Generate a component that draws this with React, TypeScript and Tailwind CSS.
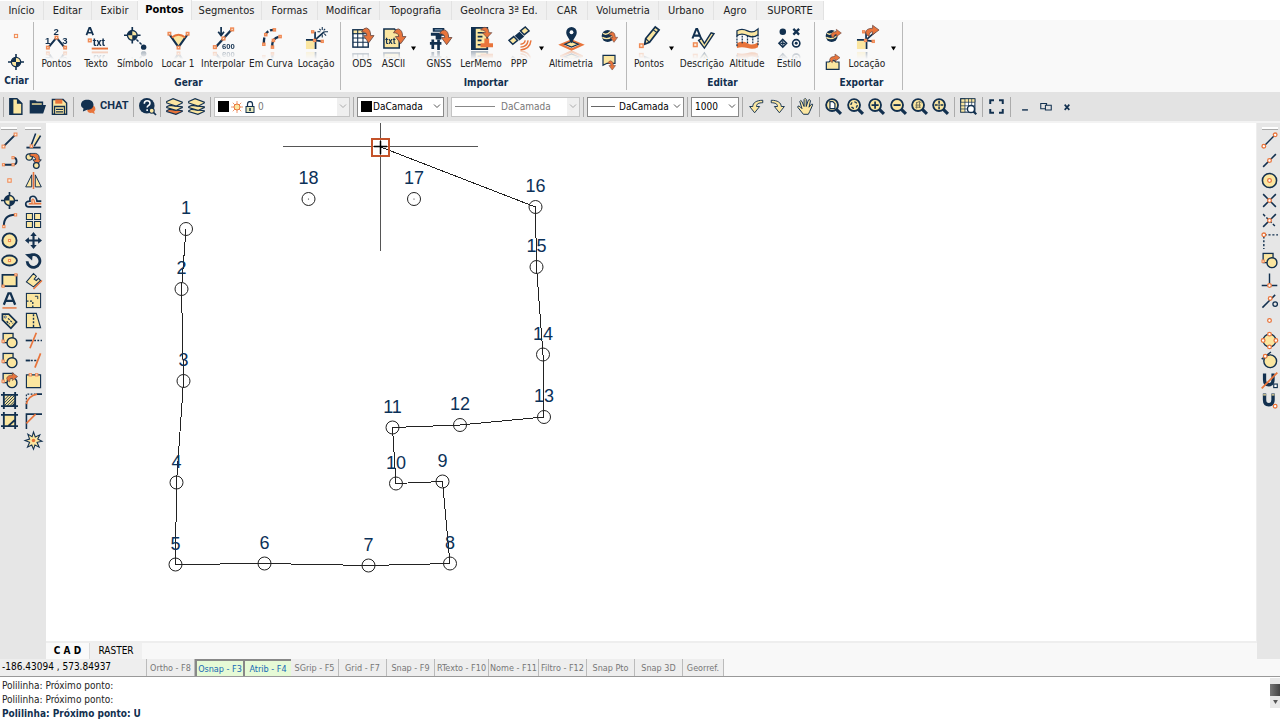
import React, { type ReactNode } from "react";

const N = "#12304f";
const O = "#e8743b";
const Y = "#fbe6a0";

/* ---------- drawing helpers ---------- */

const Sq = ({ x, y, r = 2 }: { x: number; y: number; r?: number }) => (
  <rect x={x - r} y={y - r} width={r * 2} height={r * 2} fill="#fdeedd" stroke="#f08a55" strokeWidth={1.5} />
);
const Ring = ({ x, y, r = 2.6 }: { x: number; y: number; r?: number }) => (
  <circle cx={x} cy={y} r={r} fill="#fff" stroke={O} strokeWidth={1.8} />
);
const Lens = ({ children }: { children?: ReactNode }) => (
  <>
    <path d="M16 16l6.500 6.500" stroke={N} strokeWidth={4.400} />
    <circle cx="10" cy="10" r="8.400" fill={Y} stroke={N} strokeWidth={2.600} />
    {children}
  </>
);
const Target = () => (
  <>
    <path d="M12 0v24M0 12h24" stroke={N} strokeWidth={2.4} />
    <circle cx="12" cy="12" r="7" fill={Y} stroke={N} strokeWidth={2} />
    <path d="M12 12V5a7 7 0 0 0-7 7zM12 12v7a7 7 0 0 0 7-7z" fill={N} />
  </>
);
const Curl = ({ t = "" }: { t?: string }) => (
  <path transform={t} d="M-1 3Q1-1 4-1 8.500 0 8.500 7H12L6.500 14.500 1 7H4.500Q4.500 3-1 3z" fill={O} stroke="#6b4a45" strokeWidth={0.9} />
);
const Shapes = () => (
  <>
    <rect x="3" y="2" width="14" height="13" fill={Y} stroke={N} strokeWidth={1.8} />
    <circle cx="15.500" cy="15" r="7" fill={Y} stroke={N} strokeWidth={2} />
    <Sq x={3} y={13} r={1.6} />
  </>
);
const Globe = () => (
  <>
    <circle cx="10" cy="12" r="9" fill={N} />
    <path d="M3 8c4 3 9 0 12-3M2 14c5 3 11 2 16-2" stroke={Y} strokeWidth={2} fill="none" />
  </>
);
const Stake = () => (
  <>
    <rect x="1" y="14" width="9" height="9" fill={Y} />
    <path d="M1 13.500h10V23M10.500 13.500V5M10.500 13.500L20 5M10.500 14l8 1" stroke={N} strokeWidth={1.8} fill="none" />
    <Sq x={8} y={5} r={1} />
    <Sq x={18} y={15} r={1} />
    <Sq x={10} y={14} r={1} />
  </>
);
const Layers = ({ hot = false }: { hot?: boolean }) => (
  <>
    <path d="M1 18l4-2 18 2v1l-9 4-13-4z" fill={hot ? O : Y} stroke={N} strokeWidth={1.6} />
    <path d="M1 12.500l4-2 18 2v1l-9 4-13-4z" fill={Y} stroke={N} strokeWidth={1.6} />
    <path d="M1 5l9-4 13 5v1l-9 4.500L1 7z" fill={Y} stroke={N} strokeWidth={1.6} />
  </>
);
const Grid4 = ({ w }: { w: number }) => (
  <>
    <rect x="2" y="3" width={w} height="18" fill="#fff" stroke={N} strokeWidth={1.5} />
    <rect x="2" y="3" width={w} height="4" fill={Y} stroke={N} strokeWidth={1.2} />
    <path d={`M2 11.500h${w}M2 16h${w}M7 3v18M12.500 3v18`} stroke={N} strokeWidth={1.1} />
  </>
);

const art: Record<string, ReactNode> = {
  point: <Sq x={12} y={12} r={2.4} />,
  target: <Target />,
  pontos: (
    <>
      <path d="M3 22l9-11 9 11" stroke={N} strokeWidth={2.2} fill="none" />
      <Sq x={3} y={21.500} r={1.3} /><Sq x={12} y={11} r={1.3} /><Sq x={21} y={21.500} r={1.3} />
      <g fill={N} fontFamily="Liberation Sans, sans-serif" fontWeight="bold" fontSize="10">
        <text x="0" y="17.500">1</text><text x="9" y="8">2</text><text x="18" y="17.500">3</text>
      </g>
    </>
  ),
  texto: (
    <>
      <path d="M1.500 8.500L4.500 1h1l3 7.500M3 6h4" stroke={N} strokeWidth={1.8} fill="none" />
      <Sq x={5} y={14} r={1.4} />
      <text x="8" y="19.500" fill={N} fontFamily="Roboto, sans-serif" fontWeight="bold" fontSize="11">txt</text>
      <path d="M7 22.500h17" stroke={O} strokeWidth={2} />
    </>
  ),
  simbolo: (
    <>
      <g transform="scale(.72)"><Target /></g>
      <path d="M13 13l6 6" stroke={N} strokeWidth={1.5} strokeDasharray="3 1.500" />
      <circle cx="20.500" cy="21" r="2.800" fill={N} />
    </>
  ),
  locar: (
    <>
      <path d="M12 20L5 10q7-5 14 0z" fill={Y} />
      <path d="M2 7l10 14L22 7" stroke={N} strokeWidth={2.2} fill="none" />
      <path d="M5 11q7-6 14 0" stroke={O} strokeWidth={2} fill="none" />
      <Sq x={2.500} y={7} r={1.3} /><Sq x={12} y={21.500} r={1.3} /><Sq x={21.500} y={7} r={1.3} />
    </>
  ),
  interpolar: (
    <>
      <path d="M3 22L21 2" stroke={N} strokeWidth={2.4} />
      <path d="M9.500 0v8M6.500 5l3 4 3-4" stroke={N} strokeWidth={1.8} fill="none" />
      <Sq x={3} y={21} r={1.4} /><Sq x={12} y={12} r={1.4} /><Sq x={21} y={2.500} r={1.4} />
      <text x="10.500" y="22.500" fill={N} fontFamily="Liberation Sans, sans-serif" fontWeight="bold" fontSize="8">600</text>
    </>
  ),
  curva: (
    <>
      <path d="M4 17C4 8 7 3 14 3M13 21c-1-5 1-10 8-11" stroke={N} strokeWidth={2.4} strokeDasharray="6 2" fill="none" />
      <Sq x={4} y={18} r={1.1} /><Sq x={6} y={8} r={1.1} /><Sq x={15} y={3} r={1.1} />
      <Sq x={13} y={21} r={1.1} /><Sq x={14} y={14} r={1.1} /><Sq x={21} y={10} r={1.1} />
    </>
  ),
  locacao: (
    <>
      <Stake />
      <path d="M18 0v3M18 8v3M13 5h3M20 5h4M15 2l1.500 1.500M21 2l-1.500 1.500M20 7l2 2" stroke={N} strokeWidth={1.1} />
    </>
  ),
  ods: <><Grid4 w={16} /><Curl t="translate(12 2)" /></>,
  ascii: (
    <>
      <path d="M2 2h11l5 5v15H2z" fill={Y} stroke={N} strokeWidth={1.6} />
      <text x="3.500" y="17.500" fill={N} fontFamily="Roboto, sans-serif" fontWeight="bold" fontSize="9">txt</text>
      <Curl t="translate(13 3)" />
    </>
  ),
  gnss: (
    <>
      <path d="M5 1h12v4H5zM3 6h15v3H3zM8 9h6v4H8z" fill={N} />
      <path d="M5 13v10M11 13v11M2 17h12" stroke={N} strokeWidth={2.8} />
      <path d="M7 3h8" stroke="#7fa0bb" strokeWidth={1.2} />
      <Curl t="translate(13 4)" />
    </>
  ),
  memo: (
    <>
      <path d="M2 1h16v22H2z" fill={Y} stroke={N} strokeWidth={1.9} />
      <path d="M2 1h4v22H2z" fill={N} />
      <path d="M8 6h7M8 10h5M8 14h4M8 18.500h4" stroke={N} strokeWidth={1.7} />
      <path d="M11 21h13v-4h-4v-5h-5v5h-4z" fill={O} />
      <Curl t="translate(12 1) scale(.9 .7)" />
    </>
  ),
  ppp: (
    <>
      <path d="M1 14l5-4 4 4-5 4zM13 4l5-4 4 4-5 4z" fill={Y} stroke={N} strokeWidth={1.5} />
      <path d="M7 9l5-4 5 5-5 4z" fill={N} />
      <path d="M13 18q4 0 5-4M13 21q7 0 8-7M13 24q10-1 11-10" stroke={O} strokeWidth={1.5} fill="none" />
    </>
  ),
  altimetria: (
    <>
      <path d="M1 18.500l11-4.500 11 4.500-11 5z" fill="#fff" stroke={O} strokeWidth={2.2} />
      <path d="M5 18l7-3 7 3-7 3z" fill={Y} stroke={N} strokeWidth={1.3} />
      <path d="M12 17C8 10 6.500 8.500 6.500 5.500a5.500 5.500 0 0 1 11 0C17.500 8.500 16 10 12 17z" fill={N} />
      <circle cx="12" cy="5.500" r="2" fill="#fff" />
    </>
  ),
  globeIn: <><Globe /><Curl t="translate(13 7)" /></>,
  noteOut: (
    <>
      <path d="M3 2h18v12H9l-6 3z" fill={Y} stroke={N} strokeWidth={1.8} />
      <Curl t="translate(11 11) scale(.9)" />
    </>
  ),
  pencil: (
    <>
      <path d="M7 18l1-6L18 0l4 3-10 13z" fill={Y} stroke={N} strokeWidth={1.8} />
      <path d="M16 3l4 3M8 12l4 4" stroke={N} strokeWidth={1.2} />
      <Sq x={3.500} y={19.500} r={1.8} />
    </>
  ),
  descricao: (
    <>
      <path d="M1.500 12L5.500 2h1l4 10M3 9h6" stroke={N} strokeWidth={2.1} fill="none" />
      <Sq x={4.500} y={18.500} r={1.9} />
      <path d="M8 14l3-2 3 5 7-11 3 1-10 15z" fill={Y} stroke={N} strokeWidth={1.5} />
    </>
  ),
  altitude: (
    <>
      <path d="M1 4q5-3 11 0t11-2v6q-5 4-11 1T1 9z" fill={Y} stroke={N} strokeWidth={1.3} />
      <path d="M1 17q6-3 11 0t11-1v5q-5 3-11 1t-11 0z" fill={O} />
      <path d="M1 9v12M6.500 9v8M12 9v9M17.500 9v8M23 8v12" stroke={N} strokeWidth={1.3} strokeDasharray="2 1" />
    </>
  ),
  estilo: (
    <>
      <circle cx="5" cy="5" r="3.400" fill={N} />
      <path d="M16 2l6 6M22 2l-6 6" stroke={N} strokeWidth={2.4} />
      <path d="M5 13l4 4-4 4-4-4z" fill="none" stroke={N} strokeWidth={1.6} />
      <path d="M5 14.500v5M2.500 17h5" stroke={N} strokeWidth={1.3} />
      <circle cx="19" cy="17" r="3.800" fill="none" stroke={N} strokeWidth={1.7} />
      <circle cx="19" cy="17" r="1.500" fill={N} />
    </>
  ),
  globeOut: <><Globe /><Curl t="translate(10 14) rotate(-90)" /></>,
  noteIn: (
    <>
      <path d="M2 12h4l2-2h6l2 2h5v11H2z" fill={Y} stroke={N} strokeWidth={1.8} />
      <Curl t="translate(8 12) rotate(-90)" />
    </>
  ),
  locacaoOut: <><Stake /><Curl t="translate(11 9) rotate(-90) scale(.9)" /></>,

  file: (
    <>
      <path d="M4 1h10l7 7v15H4z" fill={Y} stroke={N} strokeWidth={2} />
      <path d="M4 1h5v22H4zM14 1v7h7z" fill={N} />
    </>
  ),
  open: (
    <>
      <path d="M1 3h8l2 2h9v5H1z" fill={N} />
      <path d="M1 10h23l-4 12H1z" fill={N} />
      <path d="M4 7.500h14v2H4z" fill={Y} />
    </>
  ),
  save: (
    <>
      <path d="M2 2h15l5 5v16H2z" fill={Y} stroke={N} strokeWidth={2} />
      <path d="M6 2h10v6H6z" fill={O} />
      <path d="M5 12h14v11H5z" fill={Y} stroke={N} strokeWidth={1.8} />
      <path d="M7 16h10M7 19.500h10" stroke={N} strokeWidth={1.6} />
    </>
  ),
  chat: (
    <>
      <path d="M14 10c6-1 9 2 9 6 0 2-1 3-2 4l1 4-4-2c-4 1-8-1-8-4z" fill={O} />
      <path d="M10 1c6 0 10 3 10 8s-4 8-10 8l-7 3 1-5C1 13 0 11 0 9c0-5 4-8 10-8z" fill={N} />
    </>
  ),
  help: (
    <>
      <circle cx="11" cy="11" r="11" fill={N} />
      <path d="M7.500 8q0-4 4-4t4 3.500q0 2-2 3t-2 3M11.500 16v2.500" stroke="#fff" strokeWidth={2.200} fill="none" />
      <path d="M20 20l4 4" stroke={N} strokeWidth={2.400} />
      <circle cx="18" cy="18" r="3.500" fill={Y} stroke={N} strokeWidth={1.600} />
    </>
  ),
  layersHot: <Layers hot />,
  layers: <Layers />,
  undo: <path d="M22 2C12 2 6 6 6 12H1l8 10 8-10h-5c0-4 3-6 10-6z" fill={Y} stroke={N} strokeWidth={1.5} />,
  redo: <path d="M2 2c10 0 16 4 16 10h5l-8 10-8-10h5c0-4-3-6-10-6z" fill={Y} stroke={N} strokeWidth={1.5} />,
  hand: (
    <path d="M9 23L1 13q0-3 3-1l3 3L4 5q1-3 3 0l3 7V2q1.500-3 3 0v10l3-9q2-2 3 1l-2 9 3-4q3-1 2 1l-4 9-2 4z" fill={Y} stroke={N} strokeWidth={1.400} />
  ),
  zoomPage: <Lens><path d="M7 5h4l3 3v7H7z" fill="#fff" stroke={N} strokeWidth={1.700} /></Lens>,
  zoomAll: <Lens><circle cx="10" cy="10" r="4.500" fill="none" stroke={N} strokeWidth={1.800} strokeDasharray="4 3" /></Lens>,
  zoomIn: <Lens><path d="M10 5v10M5 10h10" stroke={N} strokeWidth={2.400} /></Lens>,
  zoomOut: <Lens><path d="M5 10h10" stroke={N} strokeWidth={2.600} /></Lens>,
  zoomSel: <Lens><path d="M7 7l5-2 3 2M6 10h8M6 13h8M8 6v9M12 5v9" stroke="#6a6a55" strokeWidth={1.200} fill="none" /></Lens>,
  zoomExt: <Lens><path d="M10 4v4M10 12v4M4 10h4M12 10h4" stroke={N} strokeWidth={2.200} /><circle cx="10" cy="10" r="1.300" fill={N} /></Lens>,
  tableFind: (
    <>
      <rect x="1" y="1" width="20" height="19" fill="#fff" stroke={N} strokeWidth={1.500} />
      <path d="M1 1h6v19H1zM1 1h20v5H1z" fill={Y} stroke={N} strokeWidth={1} />
      <path d="M1 11h20M1 15.500h20M12 1v19M16.500 1v19" stroke={N} strokeWidth={1} />
      <path d="M18 18l5 5" stroke={N} strokeWidth={3} />
      <circle cx="15.500" cy="15.500" r="5" fill="#fff" stroke={N} strokeWidth={2} />
    </>
  ),
  full: <path d="M2 8V2h6M16 2h6v6M22 16v6h-6M8 22H2v-6" stroke={N} strokeWidth={3.200} fill="none" />,
  minimize: <path d="M7 17h10" stroke={N} strokeWidth={2.400} />,
  restore: (
    <>
      <path d="M3 6h10v9H3z" fill="none" stroke={N} strokeWidth={1.800} />
      <path d="M11 9h10v8H11z" fill="#e3e3e3" stroke={N} strokeWidth={1.800} />
    </>
  ),
  close: <path d="M8 8l8 9M16 8l-8 9" stroke={N} strokeWidth={2.800} />,

  line: <><path d="M3 21L21 3" stroke={N} strokeWidth={2.800} /><Sq x={3.500} y={20.500} /><Sq x={20.500} y={3.500} /></>,
  polyline: <><path d="M4 18h12q6 0 6-5t-5-5" stroke={N} strokeWidth={2.600} fill="none" /><Sq x={3.500} y={18} r={1.500} /><Sq x={17} y={8} r={1.500} /><Sq x={17} y={18} r={1.500} /></>,
  arc: <><path d="M4 20Q4 4 20 4" stroke={N} strokeWidth={2.800} fill="none" /><Sq x={4} y={20.500} r={1.600} /><Sq x={20.500} y={4} r={1.600} /></>,
  circle: <><circle cx="12" cy="12" r="10" fill={Y} stroke={N} strokeWidth={2.600} /><Sq x={12} y={12} r={1.500} /></>,
  ellipse: <><ellipse cx="12" cy="12" rx="10.500" ry="7" fill={Y} stroke={N} strokeWidth={2.600} /><Sq x={12} y={12} r={1.500} /></>,
  rect: <><rect x="2" y="4" width="20" height="16" fill={Y} stroke={N} strokeWidth={2.400} /><Sq x={3} y={20} r={1.500} /><Sq x={21} y={4} r={1.500} /></>,
  text: <><path d="M4 18L10.500 2h3L20 18M7 12.500h10" stroke={N} strokeWidth={3.200} fill="none" /><path d="M2 22.500h20" stroke={O} strokeWidth={2} /></>,
  tag: (
    <>
      <path d="M2 3h9l11 11-8 9L2 11z" fill={Y} stroke={N} strokeWidth={2.400} />
      <path d="M10 9l7 7M8 13l4 4" stroke={N} strokeWidth={1.800} strokeDasharray="3 1.500" />
      <circle cx="6" cy="7" r="1.500" fill="#fff" stroke={N} />
    </>
  ),
  shapes: <Shapes />,
  shapesCurl: <><Shapes /><Curl t="translate(9 13) rotate(-90)" /></>,
  hatch: (
    <>
      <rect x="4" y="4" width="16" height="16" fill={Y} />
      <path d="M4 12l8-8M4 16L16 4M4 20L20 4M8 20L20 8M12 20l8-8" stroke={N} strokeWidth={1.300} />
      <path d="M4 0v24M20 0v24M0 4h24M0 20h24" stroke={N} strokeWidth={2.600} />
      <path d="M20 14v6h-6z" fill={N} />
    </>
  ),
  region: (
    <>
      <rect x="4" y="4" width="16" height="16" fill={Y} />
      <path d="M4 0v24M20 0v24M0 4h24M0 20h24M10 20L20 11" stroke={N} strokeWidth={2.600} />
    </>
  ),
  erase: (
    <>
      <path d="M11 18l7-15 4 2-8 14z" fill={Y} />
      <path d="M2 22h20" stroke={N} strokeWidth={2.600} />
      <path d="M9 18l6-16M13 20l9-15" stroke={N} strokeWidth={2.200} />
      <Sq x={9} y={20} r={1.700} />
    </>
  ),
  copy: (
    <>
      <circle cx="6" cy="7" r="4.500" fill={Y} stroke={N} strokeWidth={1.800} />
      <path d="M7 2h8q6 1 5 9h3l-6 7-6-7h4q0-5-8-5z" fill={O} stroke={N} strokeWidth={1.200} />
      <circle cx="16" cy="19" r="4" fill={Y} stroke={N} strokeWidth={1.800} />
    </>
  ),
  mirror: <><path d="M9.500 4v17H1zM14.500 4v17H23z" fill={Y} stroke={N} strokeWidth={1.400} /><path d="M12 0v24" stroke={O} strokeWidth={2.200} /></>,
  offset: (
    <>
      <path d="M23 21H5q-4 0-4-4t6-4q-1-7 4-7t6 7h6" stroke={N} strokeWidth={2.400} fill="none" />
      <path d="M23 17H6q0-1 4-1-1-6 1-6t3 6h9" stroke={O} strokeWidth={1.500} fill="#f7c8a8" />
    </>
  ),
  array: <path d="M2 2h8.500v8.500H2zM13.500 2H22v8.500h-8.500zM2 13.500h8.500V22H2zM13.500 13.500H22V22h-8.500z" fill={Y} stroke={N} strokeWidth={1.500} />,
  move: <><path d="M12 3v18M3 12h18" stroke={N} strokeWidth={3} /><path d="M12 0l4.500 5.500h-9zM12 24l4.500-5.500h-9zM0 12l5.500-4.500v9zM24 12l-5.500-4.500v9z" fill={N} /></>,
  rotate: <><path d="M6 6a9 9 0 1 1-3 7" stroke={N} strokeWidth={4} fill="none" /><path d="M0 3l11-1-1 10z" fill={N} /></>,
  stretch: (
    <>
      <path d="M2 14L12 2l4 4-3 4 3 2 3-3 3 3-10 9z" fill={Y} stroke={N} strokeWidth={1.500} />
      <path d="M12 24L24 12" stroke={O} strokeWidth={2} />
    </>
  ),
  scale: <><rect x="2" y="2" width="20" height="20" fill={Y} stroke={N} strokeWidth={1.500} /><path d="M2 13h9v9" stroke={N} strokeWidth={1.800} strokeDasharray="3 2" fill="none" /><path d="M14 6h4v4" stroke={N} strokeWidth={1.300} fill="none" /></>,
  taper: <><path d="M2 2h14l6 20H2z" fill={Y} stroke={N} strokeWidth={1.600} /><path d="M12 3v18" stroke={N} strokeWidth={2} strokeDasharray="3 2" /></>,
  trim: <><path d="M1 12h9" stroke={N} strokeWidth={2.400} /><path d="M13 12h11" stroke={N} strokeWidth={2} strokeDasharray="2.500 2" /><path d="M7 23L16 1" stroke={O} strokeWidth={2.400} /></>,
  extend: <><path d="M1 12h6" stroke={N} strokeWidth={2.600} /><path d="M8 12h10" stroke={N} strokeWidth={2} strokeDasharray="3 2" /><path d="M14 22L22 2" stroke={O} strokeWidth={2.400} /></>,
  brk: <><path d="M2 4h20v18H2z" fill={Y} stroke={N} strokeWidth={1.600} /><Sq x={7.500} y={4} r={1.600} /><Sq x={16.500} y={4} r={1.600} /></>,
  fillet: <><path d="M2 24V16M16 3h8" stroke={N} strokeWidth={2.400} /><path d="M2 15V3h13" stroke={N} strokeWidth={1.800} strokeDasharray="2.500 2" fill="none" /><path d="M2 17Q4 6 17 3" stroke={O} strokeWidth={2.200} fill="none" /></>,
  chamfer: <><path d="M2 24V3h22" stroke={N} strokeWidth={2.200} fill="none" /><path d="M2 16L15 3" stroke={O} strokeWidth={2.200} /></>,
  explode: <><path d="M12 0l2.500 7L21 4l-3 6 6 3-7 1.500 3 7-6-3-2 6-2.500-6-6 3 3-7L0 12l6.500-2L4 3l6 3.500z" fill={Y} stroke={N} strokeWidth={1.500} /><circle cx="12" cy="12" r="2.500" fill={O} /></>,

  snEnd: <><path d="M4 20L20 4" stroke={N} strokeWidth={2} /><Ring x={4} y={20} /><Ring x={20} y={4} /></>,
  snMid: <><path d="M3 21L21 3" stroke={N} strokeWidth={2.200} /><Ring x={12} y={12} /></>,
  snCen: <><circle cx="12" cy="12" r="10" fill={Y} stroke={N} strokeWidth={2.200} /><Ring x={12} y={12} /></>,
  snInt: <><path d="M3 3l18 18M21 3L3 21" stroke={N} strokeWidth={2.200} /><Ring x={12} y={12} /></>,
  snApp: <><path d="M21 3L3 21" stroke={N} strokeWidth={2.200} /><path d="M3 3l18 18" stroke={N} strokeWidth={2} strokeDasharray="4 2.500" /><Ring x={12} y={12} /></>,
  snExt: <><path d="M5 4h19M4 6v18" stroke={N} strokeWidth={2} strokeDasharray="3 2.500" /><Ring x={4} y={4} /></>,
  snIns: <Shapes />,
  snPer: <><path d="M12 2v18M1 19h22" stroke={N} strokeWidth={2} /><Ring x={12} y={19} /></>,
  snTan: <><path d="M2 22L20 4" stroke={N} strokeWidth={2.200} /><circle cx="20" cy="17" r="3.200" fill="none" stroke={N} strokeWidth={1.800} /><Ring x={13} y={9} /></>,
  snNode: <Ring x={12} y={12} />,
  snQua: <><circle cx="12" cy="12" r="9" fill={Y} stroke={N} strokeWidth={1.800} /><Ring x={12} y={3} /><Ring x={12} y={21} /><Ring x={3} y={12} /><Ring x={21} y={12} /></>,
  snNear: <><circle cx="13" cy="13" r="9" fill={Y} stroke={N} strokeWidth={2} /><path d="M1 10L14 0" stroke={N} strokeWidth={2} /><Ring x={6} y={6} /></>,
  snOff: (
    <>
      <path d="M5 2v9q0 7 6 7t6-7V2" stroke={N} strokeWidth={4.600} fill="none" />
      <path d="M1 23L23 1" stroke={O} strokeWidth={2.600} />
      <rect x="18" y="17" width="5" height="5" fill="#fff" stroke={N} strokeWidth={1.600} />
    </>
  ),
  snOn: (
    <>
      <path d="M5 2v9q0 7 6 7t6-7V2" stroke={N} strokeWidth={4.800} fill="none" />
      <path d="M3 4h4M15 4h4" stroke={Y} strokeWidth={2} />
      <Ring x={20} y={20} />
    </>
  ),
};

const Icon = ({ name, className }: { name: string; className: string }) => (
  <svg viewBox="0 0 24 24" className={`shrink-0 overflow-visible ${className}`} aria-hidden="true">
    {art[name]}
  </svg>
);

/* ---------- ribbon ---------- */

const tabs: [string, string][] = [
  ["Início", "w-[44px]"], ["Editar", "w-[48px]"], ["Exibir", "w-[46px]"], ["Pontos", "w-[54px]"],
  ["Segmentos", "w-[70px]"], ["Formas", "w-[56px]"], ["Modificar", "w-[62px]"], ["Topografia", "w-[72px]"],
  ["GeoIncra 3ª Ed.", "w-[95px]"], ["CAR", "w-[41px]"], ["Volumetria", "w-[71px]"], ["Urbano", "w-[55px]"],
  ["Agro", "w-[43px]"], ["SUPORTE", "w-[67px]"],
];

const Big = ({ icon, label, w }: { icon: string; label: string; w: string }) => (
  <button className={`flex flex-col items-center whitespace-nowrap pt-[5px] ${w}`}>
    <Icon
      name={icon}
      className="size-[23px] [-webkit-box-reflect:below_1px_linear-gradient(transparent_65%,rgba(0,0,0,0.35))]"
    />
    <span className="mt-1 text-[10px] leading-5">{label}</span>
  </button>
);
const Drop = ({ label }: { label: string }) => (
  <button aria-label={label} className="flex w-2 items-center justify-center">
    <svg viewBox="0 0 6 5" className="h-[5px] w-[5px]"><path d="M0 0h6L3 5z" /></svg>
  </button>
);
const Pair = ({ a, b, w }: { a: [string, string]; b: [string, string]; w: string }) => (
  <div className={`flex flex-col items-center gap-[10px] pt-1.5 ${w}`}>
    {[a, b].map(([icon, label]) => (
      <button key={icon} aria-label={label}><Icon name={icon} className="size-4" /></button>
    ))}
  </div>
);
const Group = ({ title, className, children }: { title: string; className: string; children: ReactNode }) => (
  <section className={`my-0.5 flex flex-col border-r border-[#b9b9b9] ${className}`}>
    <div className="flex h-[52px]">{children}</div>
    <h2 className="text-center text-[10px] font-bold leading-[18px] text-[#12304f]">{title}</h2>
  </section>
);

/* ---------- quick toolbar ---------- */

const Sep = () => <span className="mx-[3px] h-5 w-px shrink-0 bg-[#ababab]" />;
const Tool = ({ icon, label, w = "w-[22px]", size = "size-[17px]" }: { icon: string; label: string; w?: string; size?: string }) => (
  <button aria-label={label} className={`flex shrink-0 items-center justify-center ${w}`}>
    <Icon name={icon} className={size} />
  </button>
);
const Combo = ({ label, value, w, lead, off = false }: {
  label: string; value: string; w: string; lead?: ReactNode; off?: boolean;
}) => (
  <label className={`flex h-5 shrink-0 items-center border bg-white pl-[3px] ${w} ${off ? "border-[#c4c4c4] text-[#777]" : "border-[#8a8a8a] text-black"}`}>
    {lead}
    <select aria-label={label} disabled={off} className="min-w-0 flex-1 appearance-none bg-transparent text-[10px] leading-4 outline-none">
      <option>{value}</option>
    </select>
    <span className={`pointer-events-none flex h-full w-3 shrink-0 items-center justify-center ${off ? "bg-[#efefef]" : ""}`}>
      <svg viewBox="0 0 8 5" className="h-[5px] w-2"><path d="M1 0.500l3 3 3-3" fill="none" stroke={off ? "#aaa" : "#555"} /></svg>
    </span>
  </label>
);
const Swatch = () => <span className="mr-px size-[11px] shrink-0 bg-black" />;

/* ---------- side rails ---------- */

const Rail = ({ items, w, title }: { items: string[]; w: string; title: string }) => (
  <div role="toolbar" aria-label={title} aria-orientation="vertical" className={`flex flex-col items-center ${w}`}>
    <span className="mt-1 h-[3px] w-4 border-b border-[#aaa] bg-white" />
    {items.map((name, i) => (
      <button key={i} aria-label={name} className="flex h-5 items-center justify-center">
        <Icon name={name} className="size-[17px]" />
      </button>
    ))}
  </div>
);

const railA = ["line", "polyline", "point", "target", "arc", "circle", "ellipse", "rect", "text", "tag", "shapes", "shapes", "shapesCurl", "hatch", "region"];
const railB = ["erase", "copy", "mirror", "offset", "array", "move", "rotate", "stretch", "scale", "taper", "trim", "extend", "brk", "fillet", "chamfer", "explode"];
const railC = ["snEnd", "snMid", "snCen", "snInt", "snApp", "snExt", "snIns", "snPer", "snTan", "snNode", "snQua", "snNear", "snOff", "snOn"];

/* ---------- drawing ---------- */

const pts: [number, number][] = [
  [186, 229], [181.5, 289], [183.5, 381], [176.5, 482.5], [175.5, 564.5], [264.5, 563.5], [368.5, 565.5],
  [450, 563.5], [442.5, 481.5], [396, 483.5], [392.5, 427.5], [460, 425], [544, 417], [543, 354.5],
  [536.5, 267], [535.5, 207], [414, 199], [308.5, 199],
];
const path = [...pts.slice(0, 16), [380.5, 147]].map((p) => p.join(",")).join(" ");

const Drawing = () => (
  <svg className="block size-full" role="img" aria-label="Desenho">
    <g transform="translate(-46 -123)">
      <path d="M283 146h195M380.500 123v128" stroke="#555" shapeRendering="crispEdges" />
      <polyline points={path} fill="none" stroke="#222" shapeRendering="crispEdges" />
      {pts.map(([x, y], i) => (
        <g key={i}>
          <circle cx={x} cy={y} r="6.500" fill="none" stroke="#222" />
          {i > 15 && <circle cx={x} cy={y} r=".6" fill="#222" />}
          <text x={x} y={y - 15} textAnchor="middle" fill="#0b3158" fontSize="18" fontFamily="Liberation Sans, Arial, sans-serif">{i + 1}</text>
        </g>
      ))}
      <path d="M374 146.500h13M380.500 141v13" stroke="#000" strokeWidth="1.500" />
      <rect x="372" y="139" width="17" height="17" fill="none" stroke="#c4532a" strokeWidth="2" />
    </g>
  </svg>
);

const modes: [string, string, boolean][] = [
  ["Ortho - F8", "w-[48px]", false], ["Osnap - F3", "w-[48px]", true], ["Atrib - F4", "w-[48px]", true],
  ["SGrip - F5", "w-[48px]", false], ["Grid - F7", "w-[48px]", false], ["Snap - F9", "w-[48px]", false],
  ["RTexto - F10", "w-[54px]", false], ["Nome - F11", "w-[50px]", false], ["Filtro - F12", "w-[48px]", false],
  ["Snap Pto", "w-[48px]", false], ["Snap 3D", "w-[48px]", false], ["Georref.", "w-[41px]", false],
];

export default function App() {
  return (
    <div className="flex h-screen flex-col overflow-hidden bg-white font-['DejaVu_Sans_Condensed','Noto_Sans',sans-serif] text-[11px] text-[#222]">
      <nav className="flex h-5 shrink-0" aria-label="Guias">
        {tabs.map(([t, w]) => {
          const on = t === "Pontos";
          return (
            <button key={t} className={`shrink-0 whitespace-nowrap border-r border-[#e2e2e2] text-[11px] leading-4 ${w} ${on ? "bg-[#f9f9f9] pb-px font-bold text-black" : "mt-px bg-[#f0f0f0]"}`}>
              {t}
            </button>
          );
        })}
      </nav>

      <div className="flex h-[72px] shrink-0 bg-[#f9f9f9]">
        <Group title="Criar" className="w-[34px]">
          <Pair a={["point", "Ponto"]} b={["target", "Símbolo"]} w="w-[32px]" />
        </Group>
        <Group title="Gerar" className="w-[307px] pl-[3px]">
          <Big icon="pontos" label="Pontos" w="w-[39px]" />
          <Big icon="texto" label="Texto" w="w-[40px]" />
          <Big icon="simbolo" label="Símbolo" w="w-[38px]" />
          <Big icon="locar" label="Locar 1" w="w-[48px]" />
          <Big icon="interpolar" label="Interpolar" w="w-[42px]" />
          <Big icon="curva" label="Em Curva" w="w-[54px]" />
          <Big icon="locacao" label="Locação" w="w-[36px]" />
        </Group>
        <Group title="Importar" className="w-[286px] pl-[5px]">
          <Big icon="ods" label="ODS" w="w-[32px]" />
          <Big icon="ascii" label="ASCII" w="w-[31px]" />
          <Drop label="Mais ASCII" />
          <Big icon="gnss" label="GNSS" w="w-[44px]" />
          <Big icon="memo" label="LerMemo" w="w-[40px]" />
          <Big icon="ppp" label="PPP" w="w-[36px]" />
          <Drop label="Mais PPP" />
          <Big icon="altimetria" label="Altimetria" w="w-[52px]" />
          <Pair a={["globeIn", "Importar do globo"]} b={["noteOut", "Importar nota"]} w="w-[24px]" />
        </Group>
        <Group title="Editar" className="w-[188px] pl-1">
          <Big icon="pencil" label="Pontos" w="w-[36px]" />
          <Drop label="Mais Pontos" />
          <Big icon="descricao" label="Descrição" w="w-[54px]" />
          <Big icon="altitude" label="Altitude" w="w-[36px]" />
          <Big icon="estilo" label="Estilo" w="w-[48px]" />
        </Group>
        <Group title="Exportar" className="w-[88px] pl-1.5">
          <Pair a={["globeOut", "Exportar ao globo"]} b={["noteIn", "Exportar nota"]} w="w-[24px]" />
          <Big icon="locacaoOut" label="Locação" w="w-[44px]" />
          <Drop label="Mais Locação" />
        </Group>
      </div>

      <div role="toolbar" aria-label="Acesso rápido" className="flex h-[31px] shrink-0 items-center border-b-2 border-[#f3f3f3] bg-[#e3e3e3]">
        <span className="ml-[3px] h-5 w-px bg-[#aaa]" />
        <Tool icon="file" label="Novo" />
        <Tool icon="open" label="Abrir" />
        <Tool icon="save" label="Salvar" />
        <Sep />
        <button className="flex w-[53px] items-center gap-1 pl-1 font-['Roboto',sans-serif] text-[11px] font-bold text-[#12304f]">
          <Icon name="chat" className="size-[15px]" />CHAT
        </button>
        <Sep />
        <Tool icon="help" label="Ajuda" w="w-[20px]" />
        <Sep />
        <Tool icon="layersHot" label="Camadas" w="w-[21px]" />
        <Tool icon="layers" label="Gerenciar camadas" />
        <Sep />
        <Combo label="Camada" value="0" w="w-[136px]" off lead={
          <>
            <Swatch />
            <svg viewBox="0 0 24 24" className="mx-px size-3 shrink-0" aria-hidden="true">
              <path d="M12 0v24M0 12h24M3.500 3.500l17 17M20.500 3.500l-17 17" stroke={O} strokeWidth="1.500" />
              <circle cx="12" cy="12" r="6" fill={Y} stroke={O} strokeWidth="2" />
            </svg>
            <svg viewBox="0 0 24 24" className="mr-0.5 size-3 shrink-0" aria-hidden="true">
              <path d="M7 12V6q0-5 5-5t5 5v6" fill="none" stroke={N} strokeWidth="2.500" />
              <rect x="4" y="11" width="16" height="12" fill="#e7e7b8" stroke={N} strokeWidth="2" />
              <path d="M12 14v6" stroke={N} strokeWidth="3" />
            </svg>
          </>
        } />
        <Sep />
        <Combo label="Cor" value="DaCamada" w="w-[87px]" lead={<Swatch />} />
        <Sep />
        <Combo label="Tipo de linha" value="DaCamada" w="w-[129px]" off lead={<span className="mr-[6px] h-px w-[40px] shrink-0 bg-[#888]" />} />
        <Sep />
        <Combo label="Espessura" value="DaCamada" w="w-[97px]" lead={<span className="mr-1 h-px w-[24px] shrink-0 bg-[#666]" />} />
        <Sep />
        <Combo label="Escala" value="1000" w="w-[48px]" />
        <Sep />
        <Tool icon="undo" label="Desfazer" w="w-[21px]" size="size-[15px]" />
        <Tool icon="redo" label="Refazer" w="w-[21px]" size="size-[15px]" />
        <Sep />
        <Tool icon="hand" label="Mover vista" w="w-[21px]" />
        <Sep />
        <Tool icon="zoomPage" label="Zoom página" w="w-[21px]" />
        <Tool icon="zoomAll" label="Zoom tudo" />
        <Tool icon="zoomIn" label="Ampliar" w="w-[21px]" />
        <Tool icon="zoomOut" label="Reduzir" />
        <Tool icon="zoomSel" label="Zoom seleção" w="w-[21px]" />
        <Tool icon="zoomExt" label="Zoom extensão" w="w-[21px]" />
        <Sep />
        <Tool icon="tableFind" label="Tabela" w="w-[21px]" />
        <Sep />
        <Tool icon="full" label="Tela cheia" w="w-[21px]" size="size-[15px]" />
        <Sep />
        <Tool icon="minimize" label="Minimizar" w="w-[21px]" size="size-[14px]" />
        <Tool icon="restore" label="Restaurar" w="w-[21px]" size="size-[14px]" />
        <Tool icon="close" label="Fechar" size="size-[14px]" />
      </div>

      <div className="flex min-h-0 flex-1">
        <aside className="flex shrink-0 gap-1 bg-[#e6e6e6] pr-0.5">
          <Rail items={railA} w="w-[18px]" title="Desenho" />
          <Rail items={railB} w="w-[22px]" title="Modificar" />
        </aside>
        <div className="flex min-w-0 flex-1 flex-col">
          <main className="min-h-0 flex-1 border-b-2 border-r border-[#eeeeee] bg-white"><Drawing /></main>
          <div className="flex h-4 shrink-0 bg-[#f8f8f8] text-[10px] leading-4 text-black">
            <button className="w-[44px] border-r border-[#ddd] bg-[#fafafa] font-bold">C A D</button>
            <button className="w-[52px] bg-[#f0f0f0]">RASTER</button>
          </div>
        </div>
        <aside className="shrink-0 bg-[#e6e6e6] pl-0.5"><Rail items={railC} w="w-[21px]" title="Snap" /></aside>
      </div>

      <div className="flex h-[18px] shrink-0 border-b border-[#999] bg-[#f8f8f8] text-[9px] leading-4">
        <output className="w-[147px] border-r border-[#bbb] bg-[#eee] pl-0.5 text-[10px] leading-4 text-black">-186.43094 , 573.84937</output>
        {modes.map(([t, w, on]) => (
          <button key={t} aria-pressed={on} className={`shrink-0 whitespace-nowrap ${w} ${on ? "border-l-2 border-t-2 border-[#888] bg-[#e6fad6] leading-3 text-[#1769b5]" : "border-r border-[#bbb] bg-[#eee] text-[#777]"}`}>
            {t}
          </button>
        ))}
      </div>

      <div className="flex h-[43px] shrink-0">
        <div className="flex-1 pl-0.5 pt-0.5 text-[10px] leading-[14px] text-[#222]">
          <p>Polilinha: Próximo ponto:</p>
          <p>Polilinha: Próximo ponto:</p>
          <div className="flex gap-[3px] font-bold text-[#12304f]">
            <label htmlFor="cmd">Polilinha: Próximo ponto:</label>
            <input id="cmd" defaultValue="U" className="h-[14px] min-w-0 flex-1 outline-none" />
          </div>
        </div>
        <div className="mt-px flex h-[30px] w-[10px] flex-col items-center bg-[#e8e8e8]">
          <span className="h-[6px]" />
          <span className="h-3 w-full bg-gradient-to-r from-[#777] to-[#444]" />
          <svg viewBox="0 0 6 5" className="mt-1 h-[4px] w-[5px]"><path d="M0 0h6L3 5z" fill="#555" /></svg>
        </div>
      </div>
    </div>
  );
}
